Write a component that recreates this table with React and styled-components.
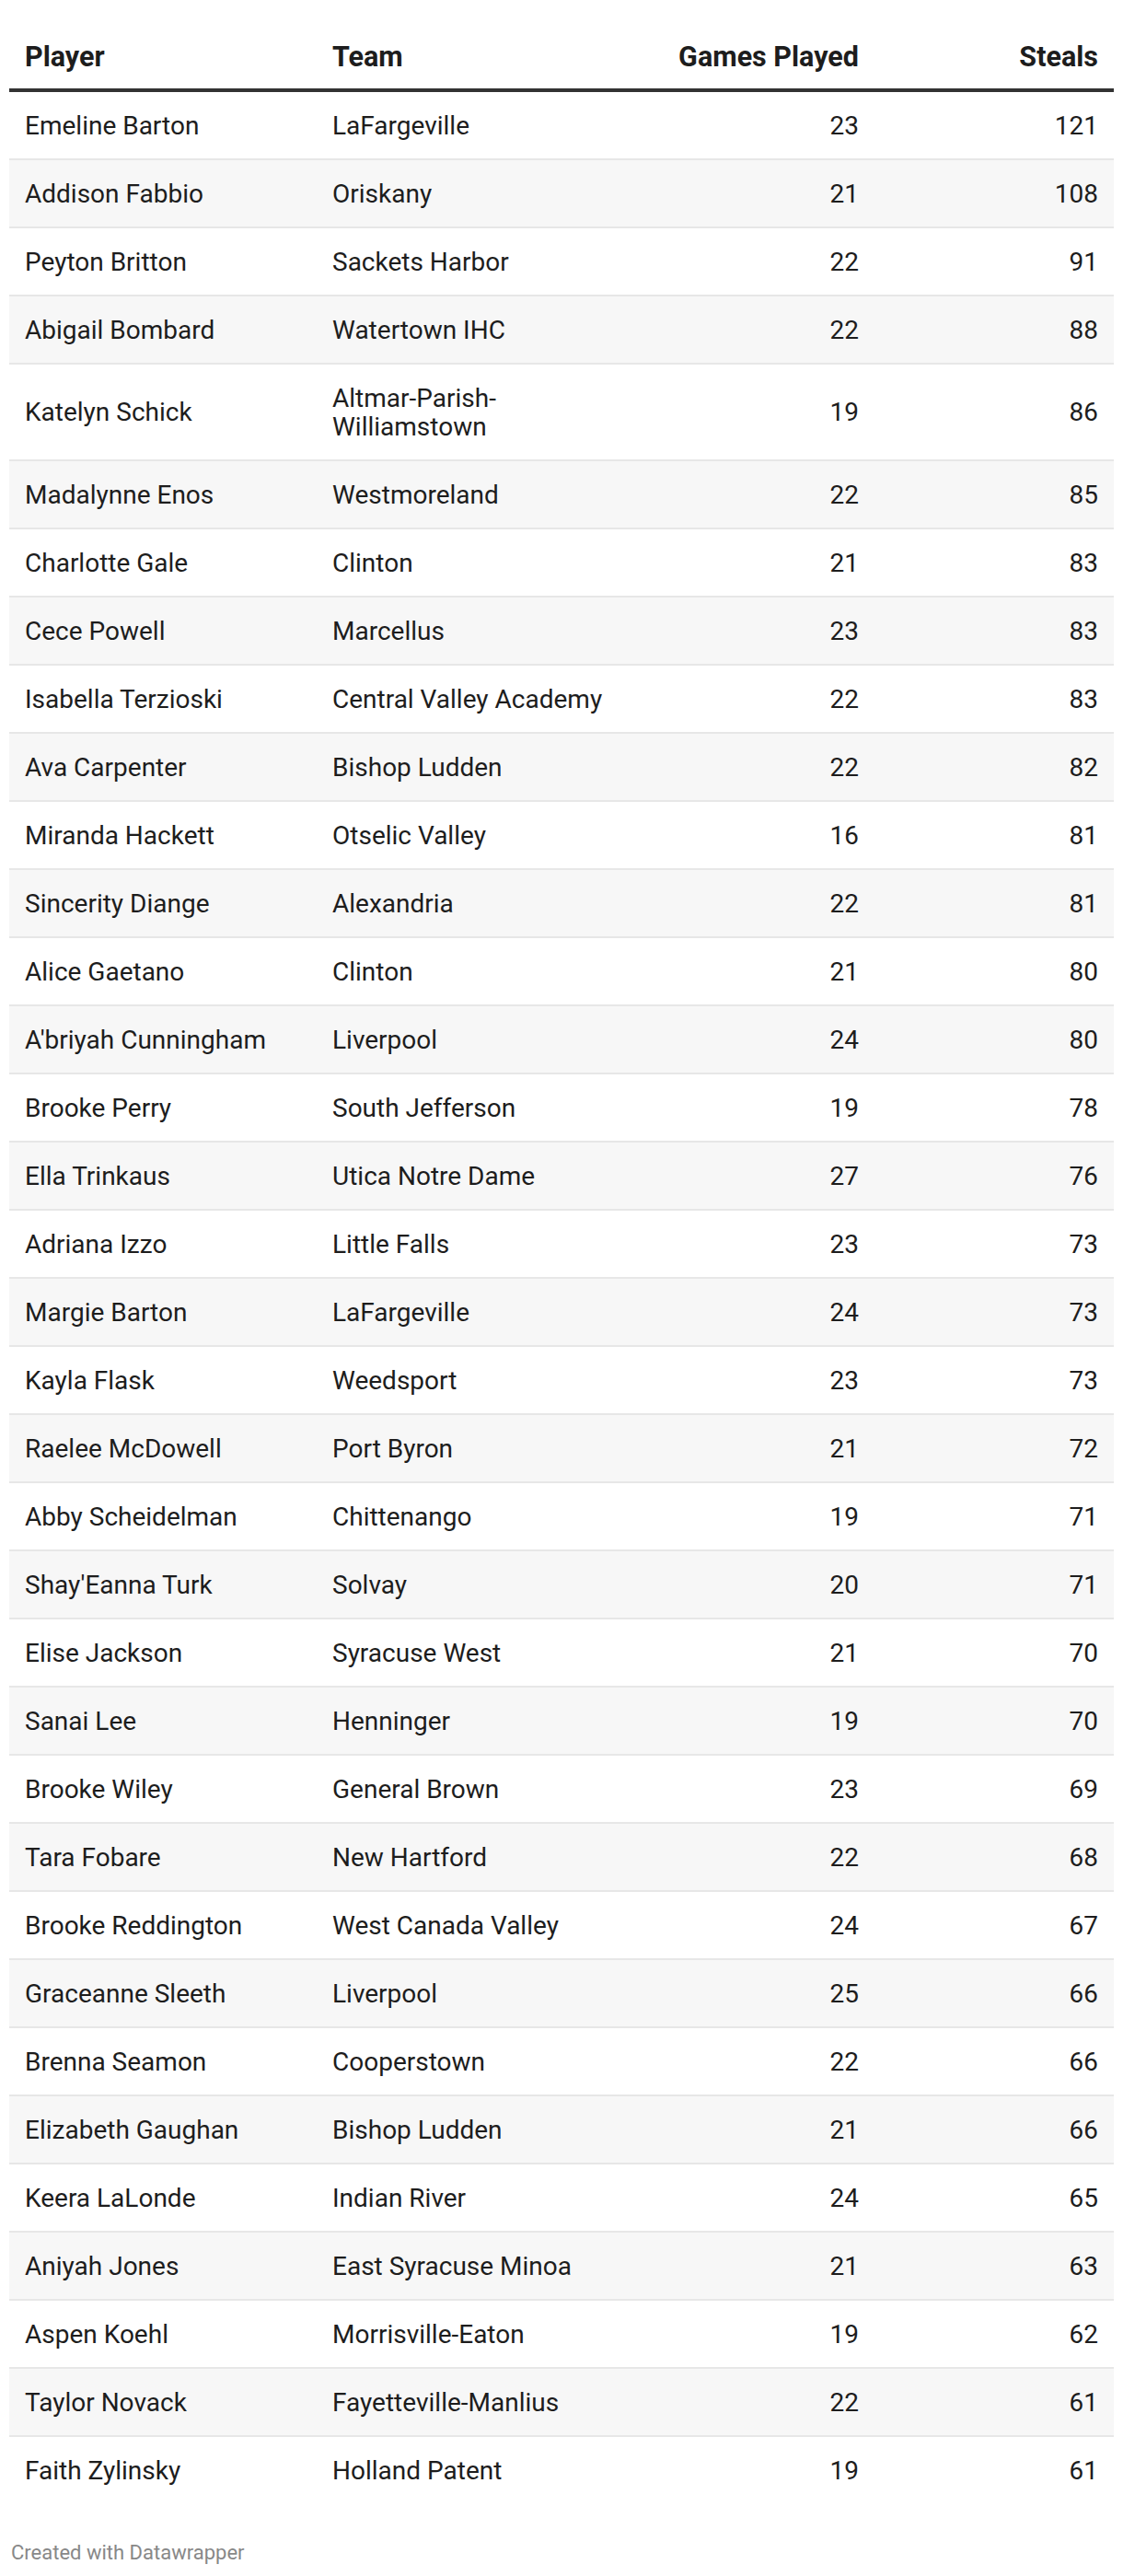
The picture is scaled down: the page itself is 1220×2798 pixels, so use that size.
import React from "react";
import styled, { createGlobalStyle } from "styled-components";

const GlobalStyle = createGlobalStyle`
  html, body {
    margin: 0;
    padding: 0;
    background: #ffffff;
  }
  body {
    font-family: Roboto, "Liberation Sans", Arial, sans-serif;
    color: #1d1d1d;
  }
`;

const Page = styled.div`
  padding: 0 10px;
  width: 1200px;
`;

const Table = styled.table`
  width: 1200px;
  table-layout: fixed;
  border-collapse: collapse;
  font-size: 28px;
  line-height: 31px;
`;

const HeadCell = styled.th`
  height: 98px;
  box-sizing: border-box;
  padding: 0 17px 17px 17px;
  vertical-align: bottom;
  text-align: ${(p) => (p.$right ? "right" : "left")};
  font-size: 30.5px;
  font-weight: 700;
  line-height: 34px;
  color: #1d1d1d;
  border-bottom: 4px solid #333333;
`;

const Row = styled.tr`
  background: ${(p) => (p.$striped ? "#f7f7f7" : "#ffffff")};
  border-bottom: 2px solid ${(p) => (p.$last ? "transparent" : "#e7e7e7")};
`;

const Cell = styled.td`
  padding: 20.5px 17px;
  vertical-align: middle;
  text-align: ${(p) => (p.$right ? "right" : "left")};
  font-variant-numeric: tabular-nums;
  color: #1d1d1d;
`;

const Footer = styled.div`
  margin-top: 39px;
  padding-left: 2px;
  font-size: 22px;
  line-height: 26px;
  color: #888888;
`;

const players = [
  ["Emeline Barton", "LaFargeville", 23, 121],
  ["Addison Fabbio", "Oriskany", 21, 108],
  ["Peyton Britton", "Sackets Harbor", 22, 91],
  ["Abigail Bombard", "Watertown IHC", 22, 88],
  ["Katelyn Schick", "Altmar-Parish-Williamstown", 19, 86],
  ["Madalynne Enos", "Westmoreland", 22, 85],
  ["Charlotte Gale", "Clinton", 21, 83],
  ["Cece Powell", "Marcellus", 23, 83],
  ["Isabella Terzioski", "Central Valley Academy", 22, 83],
  ["Ava Carpenter", "Bishop Ludden", 22, 82],
  ["Miranda Hackett", "Otselic Valley", 16, 81],
  ["Sincerity Diange", "Alexandria", 22, 81],
  ["Alice Gaetano", "Clinton", 21, 80],
  ["A'briyah Cunningham", "Liverpool", 24, 80],
  ["Brooke Perry", "South Jefferson", 19, 78],
  ["Ella Trinkaus", "Utica Notre Dame", 27, 76],
  ["Adriana Izzo", "Little Falls", 23, 73],
  ["Margie Barton", "LaFargeville", 24, 73],
  ["Kayla Flask", "Weedsport", 23, 73],
  ["Raelee McDowell", "Port Byron", 21, 72],
  ["Abby Scheidelman", "Chittenango", 19, 71],
  ["Shay'Eanna Turk", "Solvay", 20, 71],
  ["Elise Jackson", "Syracuse West", 21, 70],
  ["Sanai Lee", "Henninger", 19, 70],
  ["Brooke Wiley", "General Brown", 23, 69],
  ["Tara Fobare", "New Hartford", 22, 68],
  ["Brooke Reddington", "West Canada Valley", 24, 67],
  ["Graceanne Sleeth", "Liverpool", 25, 66],
  ["Brenna Seamon", "Cooperstown", 22, 66],
  ["Elizabeth Gaughan", "Bishop Ludden", 21, 66],
  ["Keera LaLonde", "Indian River", 24, 65],
  ["Aniyah Jones", "East Syracuse Minoa", 21, 63],
  ["Aspen Koehl", "Morrisville-Eaton", 19, 62],
  ["Taylor Novack", "Fayetteville-Manlius", 22, 61],
  ["Faith Zylinsky", "Holland Patent", 19, 61],
];

const App = () => {
  return (
    <Page>
      <GlobalStyle />
      <Table>
        <colgroup>
          <col style={{ width: 334 }} />
          <col style={{ width: 346 }} />
          <col style={{ width: 260 }} />
          <col style={{ width: 260 }} />
        </colgroup>
        <thead>
          <tr>
            <HeadCell>Player</HeadCell>
            <HeadCell>Team</HeadCell>
            <HeadCell $right>Games Played</HeadCell>
            <HeadCell $right>Steals</HeadCell>
          </tr>
        </thead>
        <tbody>
          {players.map(([name, team, games, steals], i) => (
            <Row key={name} $striped={i % 2 === 1} $last={i === players.length - 1}>
              <Cell>{name}</Cell>
              <Cell>{team}</Cell>
              <Cell $right>{games}</Cell>
              <Cell $right>{steals}</Cell>
            </Row>
          ))}
        </tbody>
      </Table>
      <Footer>Created with Datawrapper</Footer>
    </Page>
  );
};

export default App;
